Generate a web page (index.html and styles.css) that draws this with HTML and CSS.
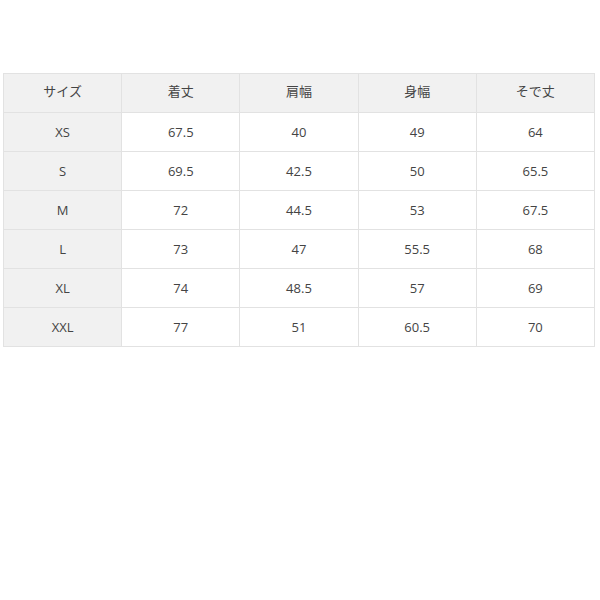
FILE: index.html
```html
<!DOCTYPE html>
<html lang="ja">
<head>
<meta charset="utf-8">
<link rel="stylesheet" href="styles.css">
</head>
<body>
<div class="wrap">
<table class="size-table">
<thead>
<tr><th>サイズ</th><th>着丈</th><th>肩幅</th><th>身幅</th><th>そで丈</th></tr>
</thead>
<tbody>
<tr><th>XS</th><td>67.5</td><td>40</td><td>49</td><td>64</td></tr>
<tr><th>S</th><td>69.5</td><td>42.5</td><td>50</td><td>65.5</td></tr>
<tr><th>M</th><td>72</td><td>44.5</td><td>53</td><td>67.5</td></tr>
<tr><th>L</th><td>73</td><td>47</td><td>55.5</td><td>68</td></tr>
<tr><th>XL</th><td>74</td><td>48.5</td><td>57</td><td>69</td></tr>
<tr><th>XXL</th><td>77</td><td>51</td><td>60.5</td><td>70</td></tr>
</tbody>
</table>
</div>
</body>
</html>
```

FILE: styles.css
```css
html, body {
  margin: 0;
  padding: 0;
  background: #fff;
}
.wrap {
  padding: 73px 5px 0 3px;
}
.size-table {
  width: 592px;
  border-collapse: collapse;
  table-layout: fixed;
  font-family: "Open Sans", "Noto Sans CJK JP", sans-serif;
  font-size: 13px;
  line-height: 18px;
  color: #444;
}
.size-table th,
.size-table td {
  height: 38px;
  padding: 0;
  border: 1px solid #e2e2e2;
  text-align: center;
  vertical-align: middle;
  font-weight: normal;
}
.size-table thead th {
  height: 33px;
  padding-bottom: 5px;
}
.size-table th {
  background: #f1f1f1;
}
.size-table td {
  background: #fff;
}
```
